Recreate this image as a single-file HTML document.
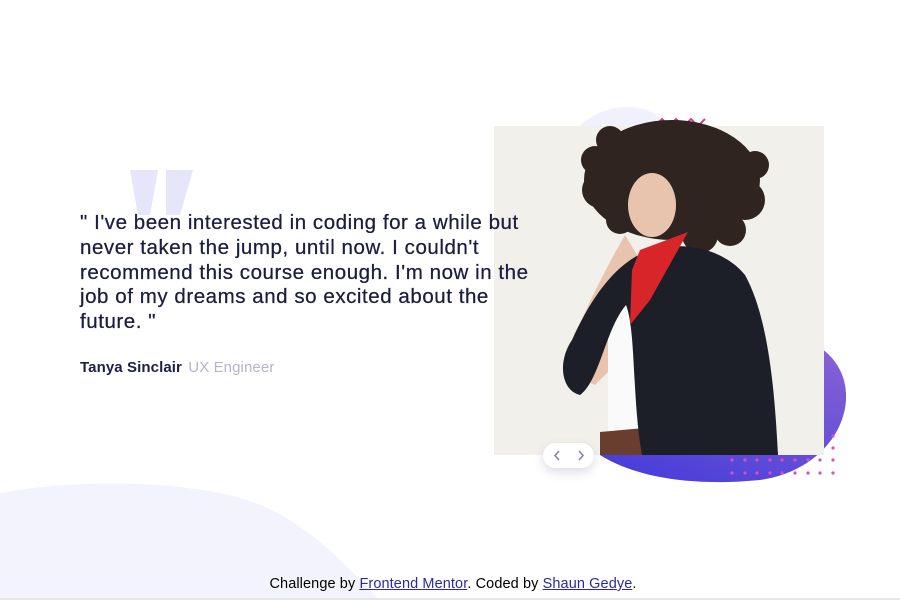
<!DOCTYPE html>
<html><head><meta charset="utf-8"><style>
*{margin:0;padding:0;box-sizing:border-box}
html,body{width:900px;height:600px;overflow:hidden;background:#fff;font-family:"Liberation Sans",sans-serif}
.abs{position:absolute}
.quote{left:80px;top:211px;font-size:20.5px;line-height:24.8px;color:#1c1c40;letter-spacing:0.55px;white-space:nowrap;-webkit-text-stroke:0.25px #1c1c40}
.name{left:80px;top:359px;font-size:15px;font-weight:bold;color:#202046;letter-spacing:0.1px}
.name span{font-weight:normal;color:#b5b5cc;margin-left:2px}
.foot{left:0;width:906px;top:576px;text-align:center;font-size:14.5px;color:#000;letter-spacing:0.1px}
.foot a{color:#2a2a9e;text-decoration:underline}
.line{left:0;top:598px;width:900px;height:2px;background:#e6e6e6}
.btn{left:543px;top:443px;width:51px;height:25px;background:#fff;border-radius:13px;box-shadow:0 4px 10px rgba(60,60,120,.18)}
</style></head><body>
<svg class="abs" style="left:0;top:0" width="900" height="600">
<defs>
<linearGradient id="g" x1="1" y1="0" x2="0.3" y2="1"><stop offset="0" stop-color="#8d66d4"/><stop offset="1" stop-color="#4a3fd9"/></linearGradient>
</defs>
<path d="M0 493 C60 482 150 478 230 495 C300 512 340 560 380 600 L0 600Z" fill="#f3f3fd"/>
<path d="M580 126 C600 105 640 100 660 118 L660 126Z" fill="#f1f0fd"/>
<path d="M130 170 L158 170 L150 215 L138 215Z" fill="#e6e5fa"/>
<path d="M166 170 L193 170 L180 215 L166 215Z" fill="#e6e5fa"/>
<path d="M600 455 C560 420 620 360 700 340 C760 325 820 330 840 370 C860 410 830 470 760 480 C700 486 640 480 600 455Z" fill="url(#g)"/>
<polyline points="655,126 662,119 669,126 676,119 684,126 691,119 698,126 705,119" fill="none" stroke="#d63d92" stroke-width="2"/>
<rect x="494" y="126" width="330" height="329" fill="#f2f0ea"/>
<g fill="#2f2420">
<ellipse cx="672" cy="180" rx="88" ry="60"/>
<circle cx="600" cy="190" r="18"/><circle cx="595" cy="160" r="14"/><circle cx="745" cy="200" r="20"/><circle cx="755" cy="165" r="14"/>
<circle cx="700" cy="235" r="18"/><circle cx="730" cy="230" r="16"/><circle cx="620" cy="220" r="14"/><circle cx="610" cy="140" r="14"/>
</g>
<path d="M625 235 C605 270 590 300 575 335 C570 355 580 380 595 385 L610 370 L620 320 L640 260Z" fill="#e8c4ae"/>
<ellipse cx="652" cy="205" rx="24" ry="32" fill="#e8c4ae"/>
<path d="M628 175 C640 160 670 158 680 180 L680 168 C665 150 635 150 625 170Z" fill="#2f2420"/>
<rect x="608" y="300" width="36" height="150" fill="#fafafa"/>
<path d="M600 432 L645 428 L645 455 L600 455Z" fill="#6a3e2e"/>
<path d="M650 250 C685 240 725 250 745 275 C770 320 775 400 778 455 L642 455 C632 400 636 330 626 305 C605 330 600 380 580 395 C560 390 558 360 572 340 C590 300 615 262 650 250Z" fill="#1d1f28"/>
<path d="M640 250 L688 232 L650 300 L630 325 L632 270Z" fill="#d8252a"/>
<g fill="#d94fc0">
<circle cx="833" cy="436" r="1.6"/><circle cx="833" cy="448" r="1.6"/>
<circle cx="732" cy="460" r="1.6"/><circle cx="745" cy="460" r="1.6"/><circle cx="757" cy="460" r="1.6"/><circle cx="770" cy="460" r="1.6"/><circle cx="782" cy="460" r="1.6"/><circle cx="795" cy="460" r="1.6"/><circle cx="808" cy="460" r="1.6"/><circle cx="820" cy="460" r="1.6"/><circle cx="833" cy="460" r="1.6"/>
<circle cx="732" cy="473" r="1.6"/><circle cx="745" cy="473" r="1.6"/><circle cx="757" cy="473" r="1.6"/><circle cx="770" cy="473" r="1.6"/><circle cx="782" cy="473" r="1.6"/><circle cx="795" cy="473" r="1.6"/><circle cx="808" cy="473" r="1.6"/><circle cx="820" cy="473" r="1.6"/><circle cx="833" cy="473" r="1.6"/>
</g>
</svg>
<div class="abs quote">" I've been interested in coding for a while but<br>never taken the jump, until now. I couldn't<br>recommend this course enough. I'm now in the<br>job of my dreams and so excited about the<br>future. "</div>
<div class="abs name">Tanya Sinclair <span>UX Engineer</span></div>
<div class="abs btn"><svg width="51" height="25"><polyline points="16,8 12,12.5 16,17" fill="none" stroke="#8585ac" stroke-width="1.6"/><polyline points="36,8 40,12.5 36,17" fill="none" stroke="#8585ac" stroke-width="1.6"/></svg></div>
<div class="abs foot">Challenge by <a>Frontend Mentor</a>. Coded by <a>Shaun Gedye</a>.</div>
<div class="abs line"></div>
</body></html>
